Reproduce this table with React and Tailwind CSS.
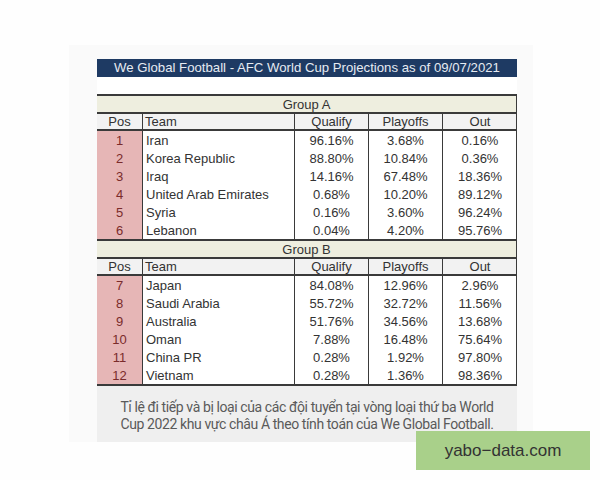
import React from 'react';

const groups = [
  {
    name: 'Group A',
    rows: [
      [1, 'Iran', '96.16%', '3.68%', '0.16%'],
      [2, 'Korea Republic', '88.80%', '10.84%', '0.36%'],
      [3, 'Iraq', '14.16%', '67.48%', '18.36%'],
      [4, 'United Arab Emirates', '0.68%', '10.20%', '89.12%'],
      [5, 'Syria', '0.16%', '3.60%', '96.24%'],
      [6, 'Lebanon', '0.04%', '4.20%', '95.76%'],
    ],
  },
  {
    name: 'Group B',
    rows: [
      [7, 'Japan', '84.08%', '12.96%', '2.96%'],
      [8, 'Saudi Arabia', '55.72%', '32.72%', '11.56%'],
      [9, 'Australia', '51.76%', '34.56%', '13.68%'],
      [10, 'Oman', '7.88%', '16.48%', '75.64%'],
      [11, 'China PR', '0.28%', '1.92%', '97.80%'],
      [12, 'Vietnam', '0.28%', '1.36%', '98.36%'],
    ],
  },
];

const Group = ({ group }) => (
  <div>
    <div className="h-[18px] flex items-center justify-center bg-[#eeeedf] border-t-2 border-[#3a3a3a]">
      {group.name}
    </div>
    <div className="grid grid-cols-[46px_152px_74px_74px_74px] h-[19px] bg-[#f2f2f2] border-t-2 border-b-2 border-[#3a3a3a]">
      <div className="flex items-center justify-center border-r border-[#3a3a3a]">Pos</div>
      <div className="flex items-center pl-[2px] border-r border-[#3a3a3a]">Team</div>
      <div className="flex items-center justify-center border-r border-[#3a3a3a]">Qualify</div>
      <div className="flex items-center justify-center border-r border-[#3a3a3a]">Playoffs</div>
      <div className="flex items-center justify-center">Out</div>
    </div>
    {group.rows.map((r) => (
      <div key={r[0]} className="grid grid-cols-[46px_152px_74px_74px_74px] h-[18px] bg-white">
        <div className="flex items-center justify-center bg-[#e6b6b6] text-[#7a2b2b] border-r border-[#3a3a3a]">{r[0]}</div>
        <div className="flex items-center pl-[3px] border-r border-[#3a3a3a]">{r[1]}</div>
        <div className="flex items-center justify-center border-r border-[#3a3a3a]">{r[2]}</div>
        <div className="flex items-center justify-center border-r border-[#3a3a3a]">{r[3]}</div>
        <div className="flex items-center justify-center">{r[4]}</div>
      </div>
    ))}
  </div>
);

export default function App() {
  return (
    <div className="relative w-[600px] h-[480px] bg-[#fefefe] overflow-hidden">
      <div className="ml-[69px] mt-[45px] w-[464px] h-[397px] bg-[#fafafa] pt-[14px] px-[28px]">
        <div className="w-[420px] h-[18px] bg-[#1e3a63] text-[#e6ebf2] flex items-center justify-center text-[13.2px] font-['Liberation_Sans',sans-serif]">
          We Global Football - AFC World Cup Projections as of 09/07/2021
        </div>
        <div className="w-[420px] bg-white pt-[17px]">
          <div className="border-r border-[#3a3a3a] border-b-2 text-[13px] text-[#333] font-['Liberation_Sans',sans-serif] leading-none">
            {groups.map((g) => (
              <Group key={g.name} group={g} />
            ))}
          </div>
        </div>
        <div className="w-[420px] h-[56px] bg-[#efefef] pt-[13px] text-center text-[14px] leading-[17px] tracking-[-0.4px] text-[#5a5a5a] font-['Roboto',sans-serif]">
          Tỉ lệ đi tiếp và bị loại của các đội tuyển tại vòng loại thứ ba World
          <br />
          Cup 2022 khu vực châu Á theo tính toán của We Global Football.
        </div>
      </div>
      <div className="absolute left-[416px] top-[431px] w-[174px] h-[39px] bg-[#a9d08a] flex items-center justify-center text-[17px] text-[#333] font-['Liberation_Sans',sans-serif]">
        yabo−data.com
      </div>
    </div>
  );
}
